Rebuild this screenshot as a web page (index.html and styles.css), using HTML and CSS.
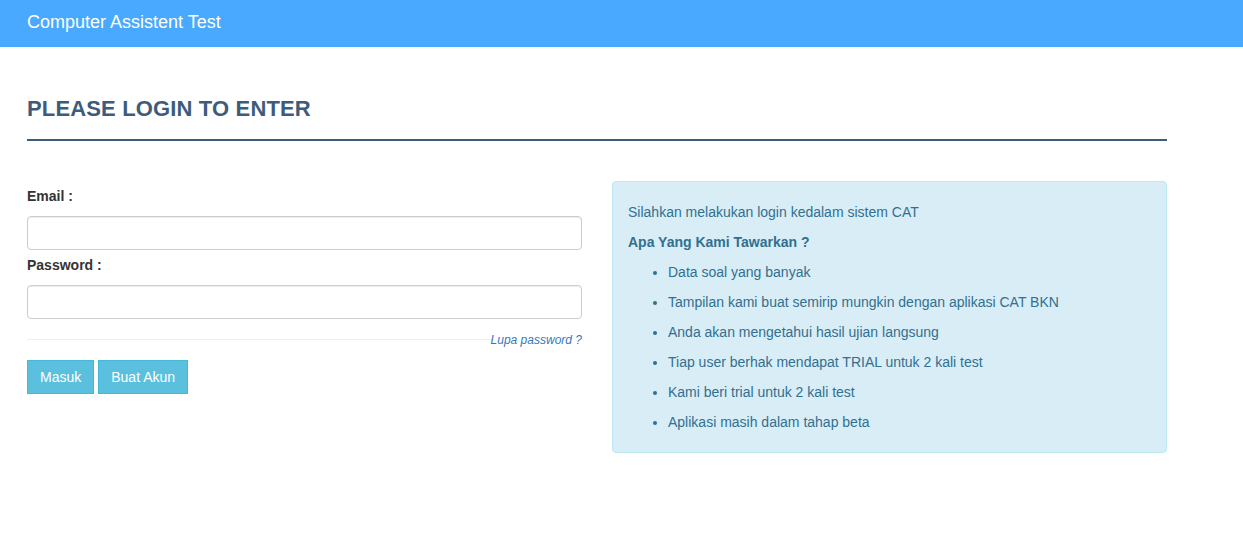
FILE: index.html
```html
<!DOCTYPE html>
<html>
<head>
<meta charset="utf-8">
<title>Computer Assistent Test</title>
<link rel="stylesheet" href="styles.css">
</head>
<body>
<nav class="navbar"><span class="brand">Computer Assistent Test</span></nav>
<main class="container">
  <h1 class="page-title">PLEASE LOGIN TO ENTER</h1>
  <div class="row">
    <form class="col login-form">
      <label class="field-label">Email :</label>
      <input class="field-input" type="text">
      <label class="field-label pw">Password :</label>
      <input class="field-input" type="password">
      <div class="forgot-row"><span class="forgot-line"></span><a class="forgot" href="#">Lupa password ?</a></div>
      <div class="actions">
        <button class="btn" type="button">Masuk</button>
        <button class="btn" type="button">Buat Akun</button>
      </div>
    </form>
    <div class="col">
      <div class="info-panel">
        <p class="info-text">Silahkan melakukan login kedalam sistem CAT</p>
        <p class="info-text info-title">Apa Yang Kami Tawarkan ?</p>
        <ul class="info-list">
          <li>Data soal yang banyak</li>
          <li>Tampilan kami buat semirip mungkin dengan aplikasi CAT BKN</li>
          <li>Anda akan mengetahui hasil ujian langsung</li>
          <li>Tiap user berhak mendapat TRIAL untuk 2 kali test</li>
          <li>Kami beri trial untuk 2 kali test</li>
          <li>Aplikasi masih dalam tahap beta</li>
        </ul>
      </div>
    </div>
  </div>
</main>
</body>
</html>
```
FILE: styles.css
```css
* { box-sizing: border-box; }
html, body {
  margin: 0;
  padding: 0;
  background: #fff;
  font-family: "Liberation Sans", Arial, sans-serif;
  font-size: 14px;
  line-height: 20px;
  color: #333;
}
.navbar {
  height: 47px;
  background: #48a9fe;
  padding: 0 27px;
  display: flex;
  align-items: center;
}
.brand {
  color: #fff;
  font-size: 18px;
  line-height: 20px;
  margin-top: -4px;
}
.container {
  width: 1167px;
  padding-left: 27px;
}
.page-title {
  margin: 0;
  padding-top: 50px;
  padding-bottom: 18px;
  font-size: 22px;
  line-height: 24px;
  font-weight: bold;
  letter-spacing: 0.15px;
  color: #3e5c7a;
  border-bottom: 2px solid #3e5c7a;
}
.row {
  display: flex;
  gap: 30px;
  margin-top: 40px;
}
.col {
  flex: 1 1 0;
  min-width: 0;
}
.login-form {
  display: flex;
  flex-direction: column;
  padding-top: 5px;
}
.field-label {
  font-weight: bold;
  color: #333;
  margin-bottom: 10px;
  line-height: 20px;
}
.field-label.pw { margin-top: 5px; }
.field-input {
  height: 34px;
  width: 100%;
  border: 1px solid #ccc;
  border-radius: 4px;
  box-shadow: inset 0 1px 1px rgba(0,0,0,0.075);
  font-family: inherit;
  font-size: 14px;
  padding: 6px 12px;
}
.forgot-row {
  display: flex;
  align-items: center;
  margin-top: 14px;
  height: 12px;
}
.forgot-line {
  flex: 1;
  height: 1px;
  background: #eee;
  margin-top: 1px;
  margin-right: -3px;
}
.forgot {
  font-size: 12px;
  font-style: italic;
  color: #337ab7;
  text-decoration: none;
  line-height: 12px;
  margin-top: 1px;
}
.actions {
  margin-top: 15px;
  display: flex;
  gap: 4px;
}
.btn {
  height: 34px;
  padding: 6px 12px;
  border: 1px solid #46b8da;
  background: #5bc0de;
  color: #fff;
  font-family: inherit;
  font-size: 14px;
  line-height: 20px;
  border-radius: 0;
}
.info-panel {
  background: #d9edf7;
  border: 1px solid #bce8f1;
  border-radius: 4px;
  color: #31708f;
  padding: 20px 15px 10px;
}
.info-text {
  margin: 0 0 10px;
}
.info-title { font-weight: bold; }
.info-list {
  margin: 0;
  padding-left: 40px;
}
.info-list li {
  margin-bottom: 10px;
}
```
